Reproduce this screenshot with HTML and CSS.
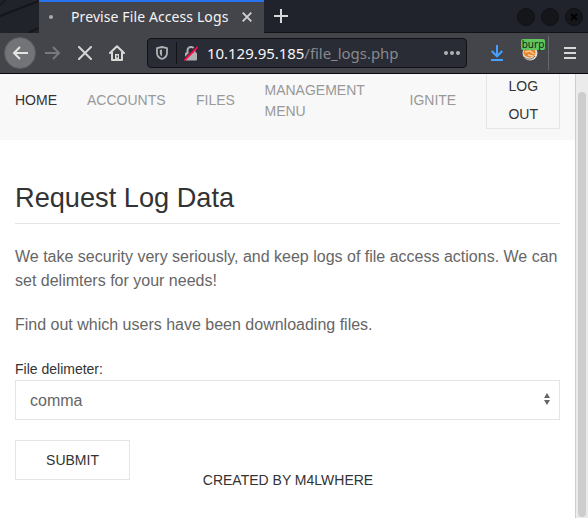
FILE: index.html
```html
<!DOCTYPE html>
<html lang="en">
<head>
<meta charset="utf-8">
<title>Previse File Access Logs</title>
<link rel="stylesheet" href="styles.css">
</head>
<body>
<div class="window">
  <header class="titlebar">
    <svg class="drag-area" viewBox="0 0 39 33"><path d="M0 16L39 1M28 33L39 28" stroke="#15161b" stroke-width="2"/><path d="M0 5L5 0" stroke="#111216" stroke-width="2" stroke-dasharray="1 1"/></svg>
    <div class="tab">
      <span class="tab-dot"></span>
      <span class="tab-title">Previse File Access Logs</span>
      <svg class="tab-close" viewBox="0 0 10 10"><path d="M.7.7l8.600 8.600M9.300.7L.7 9.300" stroke="#d3d3d4" stroke-width="1.800"/></svg>
    </div>
    <svg class="new-tab" viewBox="0 0 14 14"><path d="M7 0v14M0 7h14" stroke="#d8d8da" stroke-width="2"/></svg>
    <div class="controls">
      <span class="control"></span>
      <span class="control"></span>
      <span class="control"><svg viewBox="0 0 8 8"><path d="M1 1l6 6M7 1L1 7" stroke="#020203" stroke-width="2"/></svg></span>
    </div>
  </header>
  <div class="toolbar">
    <div class="back"><svg viewBox="0 0 16 14"><path d="M8 1L2 7l6 6M2 7h14" fill="none" stroke="#e4e4e0" stroke-width="2"/></svg></div>
    <svg class="forward" viewBox="0 0 16 14"><path d="M8 1l6 6-6 6M14 7H0" fill="none" stroke="#77797d" stroke-width="2"/></svg>
    <svg class="stop" viewBox="0 0 14 14"><path d="M1 1l12 12M13 1L1 13" stroke="#d6d6d4" stroke-width="2" stroke-linecap="round"/></svg>
    <svg class="home" viewBox="0 0 16 16"><path d="M1 8l7-6.800L15 8M3 7v8h10V7" fill="none" stroke="#d8d8d4" stroke-width="2" stroke-linejoin="round" stroke-linecap="round"/><path d="M6 15V9h4v6z" fill="#d8d8d4"/><path d="M7.500 10.500h1.500v2H7.500z" fill="#43454b"/></svg>
    <div class="address">
      <svg class="shield" viewBox="0 0 12 14"><path d="M1 2.200L6 1l5 1.200V7c0 3-2.200 5-5 6-2.800-1-5-3-5-6z" fill="none" stroke="#b1b1b3" stroke-width="1.800" stroke-linejoin="round"/><path d="M6 3.500v7C4.500 9.500 3.800 8 3.800 6.500V4z" fill="#b1b1b3"/></svg>
      <span class="divider"></span>
      <svg class="lock" viewBox="0 0 14 15"><path d="M3.500 7V4.500a3.500 3.500 0 0 1 7 0V7" fill="none" stroke="#b1b1b3" stroke-width="2"/><rect x="1" y="6.500" width="12" height="8" rx="1" fill="#b1b1b3"/><path d="M-.5 13.500L12.500 0" stroke="#292b35" stroke-width="1.500"/><path d="M.3 14.500L13.700 1" stroke="#f50b45" stroke-width="2"/></svg>
      <span class="url"><span class="host">10.129.95.185</span>/file_logs.php</span>
      <svg class="dots" viewBox="0 0 16 4"><circle cx="2" cy="2" r="2"/><circle cx="8" cy="2" r="2"/><circle cx="14" cy="2" r="2"/></svg>
    </div>
    <svg class="download" viewBox="0 0 12 16"><path d="M6 0v11M.7 6L6 11.300 11.300 6M0 15h12" fill="none" stroke="#45a1ff" stroke-width="2"/></svg>
    <div class="burp">
      <svg viewBox="0 0 16 15"><circle cx="8" cy="7" r="7.500" fill="#dedbd6"/><ellipse cx="7.500" cy="6.500" rx="6" ry="5" fill="#e9862c"/><path d="M3 6l5-1 4 3M6 9l5 1" fill="none" stroke="#f7cf9c" stroke-width="1.500"/><path d="M2 11c3 3 8 3 11-1" fill="none" stroke="#846d5c"/></svg>
      <span class="badge">burp</span>
    </div>
    <span class="tool-divider"></span>
    <svg class="menu" viewBox="0 0 12 12"><path d="M0 1h12M0 6h12M0 11h12" stroke="#d8d8d6" stroke-width="2"/></svg>
  </div>
  <div class="viewport">
    <div class="page">
      <nav class="nav">
        <a class="home-link">HOME</a>
        <a class="accounts-link">ACCOUNTS</a>
        <a class="files-link">FILES</a>
        <a class="management-link">MANAGEMENT<br>MENU</a>
        <a class="ignite-link">IGNITE</a>
        <button class="logout">LOG<br>OUT</button>
      </nav>
      <main class="content">
        <h2>Request Log Data</h2>
        <p>We take security very seriously, and keep logs of file access actions. We can set delimters for your needs!</p>
        <p>Find out which users have been downloading files.</p>
        <form>
          <div class="label">File delimeter:</div>
          <div class="select"><span>comma</span><svg viewBox="0 0 6 12"><path d="M0 5l3-5 3 5zM0 7h6l-3 5z" fill="#666"/></svg></div>
          <button class="submit" type="button">SUBMIT</button>
        </form>
        <footer>CREATED BY M4LWHERE</footer>
      </main>
    </div>
    <div class="scrollbar"><div class="thumb"></div></div>
  </div>
</div>
</body>
</html>
```
FILE: styles.css
```css
* { box-sizing: border-box; }
body { margin: 0; }
svg { display: block; flex: none; }
.window { width: 588px; height: 518px; overflow: hidden; display: flex; flex-direction: column; background: #fff; font-family: "Liberation Sans", Arial, sans-serif; }
.titlebar { height: 33px; flex: none; display: flex; align-items: center; background: #21232c; border-bottom: 1px solid #111216; }
.drag-area { width: 39px; height: 33px; background: #21232b; }
.tab { height: 33px; width: 225px; flex: none; display: flex; align-items: center; background: #43454b; border-top: 2px solid #2874f0; margin-bottom: -1px; padding-bottom: 2px; }
.tab-dot { width: 4px; height: 4px; border-radius: 50%; background: #aaabad; margin-left: 10px; }
.tab-title { width: 158px; margin-left: 18px; font: 14px/20px "Noto Sans", sans-serif; letter-spacing: .1px; color: #f4f4f4; white-space: nowrap; }
.tab-close { width: 10px; height: 10px; margin-left: 13px; }
.new-tab { width: 14px; height: 14px; margin-left: 10px; }
.controls { margin-left: auto; margin-right: 5px; display: flex; gap: 6px; padding-top: 2px; }
.control { width: 18px; height: 18px; border-radius: 50%; background: #15161a; border: 1px solid #101115; display: grid; place-items: center; }
.control svg { width: 8px; height: 8px; }
.toolbar { height: 41px; flex: none; display: flex; align-items: center; background: #43454b; border-bottom: 1px solid #08080c; }
.back { width: 32px; height: 32px; margin-left: 4px; border: 1px solid #5a5b5e; border-radius: 50%; background: #737477; display: grid; place-items: center; }
.back svg, .forward { width: 16px; height: 14px; }
.forward { margin-left: 9px; }
.stop { width: 14px; height: 14px; margin-left: 17px; }
.home { width: 16px; height: 16px; margin-left: 17px; }
.address { width: 320px; height: 30px; margin-left: 22px; border: 1px solid #111218; border-radius: 4px; background: #292b35; display: flex; align-items: center; }
.shield { width: 12px; height: 14px; margin-left: 8px; }
.divider { width: 1px; height: 22px; background: #111218; margin-left: 8px; }
.lock { width: 14px; height: 15px; margin-left: 7px; }
.url { width: 237px; margin-left: 9px; font: 15px/22px "Noto Sans", sans-serif; letter-spacing: -.04px; color: #88898d; white-space: nowrap; }
.host { color: #f5f5f5; }
.dots { width: 16px; height: 4px; fill: #b1b1b3; }
.download { width: 12px; height: 16px; margin-left: 24px; }
.burp { position: relative; width: 24px; height: 28px; margin-left: 18px; padding: 7px 0 0 1px; }
.burp svg { width: 16px; height: 15px; }
.badge { position: absolute; left: 0; top: 0; width: 24px; height: 11px; border-radius: 2px; background: #5fc65f; color: #142814; font: 10px/10px "Noto Sans", sans-serif; text-align: center; }
.tool-divider { width: 1px; height: 34px; background: #66676b; margin-left: 3px; }
.menu { width: 12px; height: 12px; margin-left: 15px; }
.viewport { flex: 1; min-height: 0; display: flex; overflow: hidden; }
.page { width: 575px; margin-top: -14px; }
.scrollbar { width: 13px; border-left: 1px solid #cdcdcd; background: #ebebeb; padding: 18px 2px 1px; display: flex; }
.thumb { width: 8px; border-radius: 4px; background: #cdcdcd; }
.nav { height: 80px; display: flex; align-items: center; background: #f8f8f8; padding: 0 15px; font-size: 14px; line-height: 21px; color: #999; }
.nav a { flex: none; }
.home-link { width: 72px; color: #333; }
.accounts-link { width: 109px; }
.files-link { width: 68.500px; }
.nav .management-link { width: 145px; padding-top: 2px; }
.ignite-link { width: 76px; }
.logout { width: 74.500px; flex: none; padding: 0 0 0 1px; border: 1px solid #e5e5e5; background: transparent; color: #333; font: 14px/28px "Liberation Sans", sans-serif; }
.content { padding: 40px 15px 0; color: #666; font-size: 16px; line-height: 24px; }
h2 { height: 44px; margin: 0 0 21px; border-bottom: 1px solid #e5e5e5; font-weight: normal; font-size: 27.200px; line-height: 35.400px; color: #333; }
p { margin: 0 0 20px; }
.label { font-size: 14px; line-height: 24px; color: #333; height: 23px; }
.select { height: 40px; border: 1px solid #e5e5e5; display: flex; align-items: center; justify-content: space-between; padding: 0 9px 0 14px; }
.select span { padding-top: 2px; }
.select svg { width: 6px; height: 12px; margin-bottom: 2px; }
.submit { display: block; width: 115px; height: 40px; margin-top: 20px; border: 1px solid #e5e5e5; background: transparent; color: #333; font: 14px/38px "Liberation Sans", sans-serif; padding: 0; }
footer { margin-top: -12px; padding-left: 1px; text-align: center; font-size: 14px; color: #333; }
```
